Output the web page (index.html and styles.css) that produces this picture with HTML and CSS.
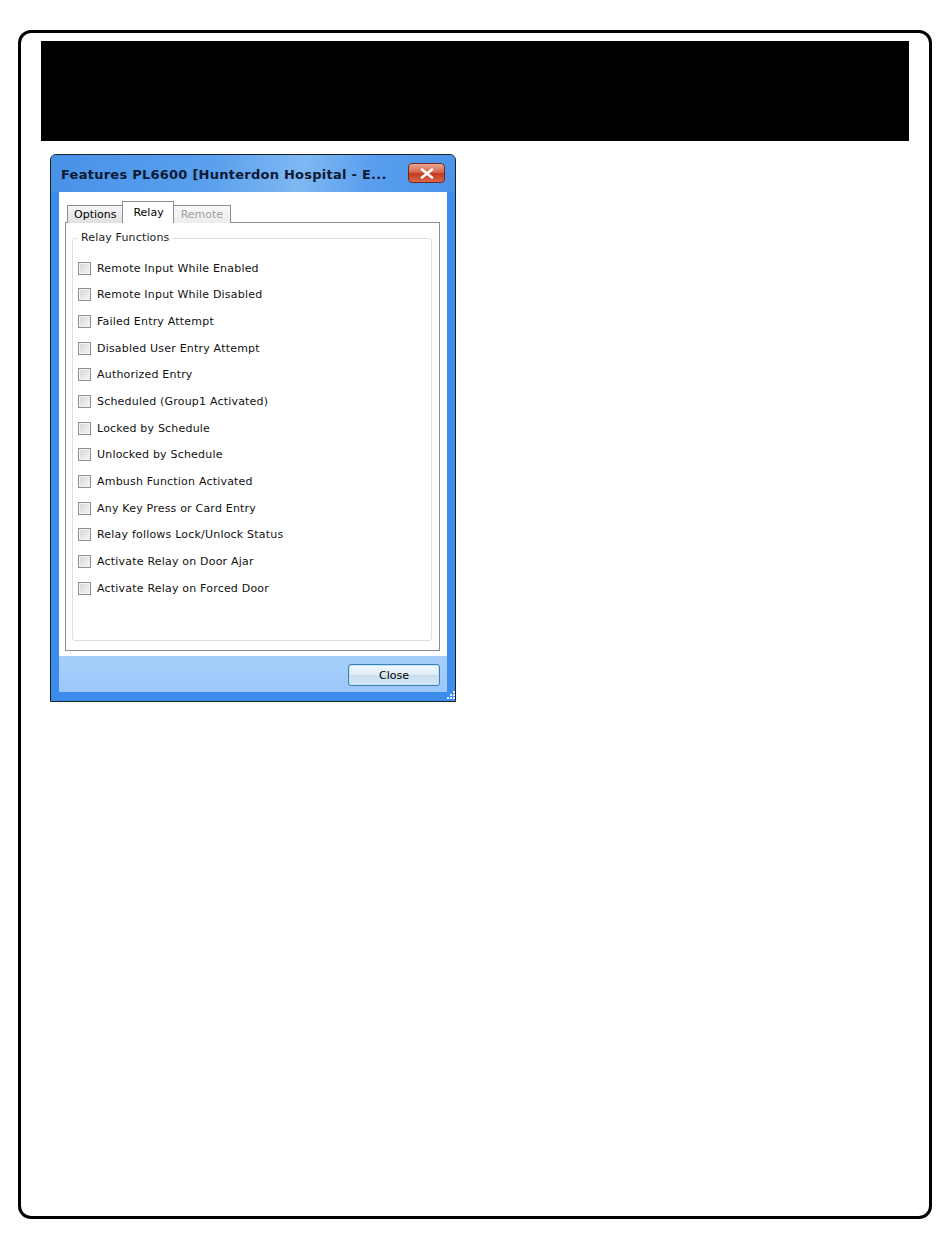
FILE: index.html
```html
<!DOCTYPE html>
<html>
<head>
<meta charset="utf-8">
<link rel="stylesheet" href="styles.css">
</head>
<body>
<div class="page">
  <div class="banner"></div>
  <div class="window">
    <div class="titlebar">
      <span class="title">Features PL6600 [Hunterdon Hospital - E...</span>
      <span class="closex">
        <svg width="14" height="11" viewBox="0 0 14 11"><path d="M2 1.5 L12 9.5 M12 1.5 L2 9.5" stroke="#fff" stroke-width="2.6" stroke-linecap="round"/></svg>
      </span>
    </div>
    <div class="client">
      <div class="tabs">
        <div class="tab">Options</div>
        <div class="tab active">Relay</div>
        <div class="tab disabled">Remote</div>
      </div>
      <div class="panel">
        <div class="group">
          <div class="legend">Relay Functions</div>
          <ul class="checks">
            <li><span class="box"></span>Remote Input While Enabled</li>
            <li><span class="box"></span>Remote Input While Disabled</li>
            <li><span class="box"></span>Failed Entry Attempt</li>
            <li><span class="box"></span>Disabled User Entry Attempt</li>
            <li><span class="box"></span>Authorized Entry</li>
            <li><span class="box"></span>Scheduled (Group1 Activated)</li>
            <li><span class="box"></span>Locked by Schedule</li>
            <li><span class="box"></span>Unlocked by Schedule</li>
            <li><span class="box"></span>Ambush Function Activated</li>
            <li><span class="box"></span>Any Key Press or Card Entry</li>
            <li><span class="box"></span>Relay follows Lock/Unlock Status</li>
            <li><span class="box"></span>Activate Relay on Door Ajar</li>
            <li><span class="box"></span>Activate Relay on Forced Door</li>
          </ul>
        </div>
      </div>
    </div>
    <div class="footer">
      <button class="btn">Close</button>
    </div>
    <div class="bottomframe">
      <svg class="grip" width="10" height="10" viewBox="0 0 10 10"><g fill="#e8f2ff"><rect x="8" y="0" width="2" height="2"/><rect x="5" y="3" width="2" height="2"/><rect x="8" y="3" width="2" height="2"/><rect x="2" y="6" width="2" height="2"/><rect x="5" y="6" width="2" height="2"/><rect x="8" y="6" width="2" height="2"/></g></svg>
    </div>
  </div>
</div>
</body>
</html>
```
FILE: styles.css
```css
html, body {
  margin: 0;
  padding: 0;
  background: #fff;
}
.page {
  box-sizing: border-box;
  margin: 30px 0 0 18px;
  width: 914px;
  height: 1189px;
  border: 3px solid #000;
  border-radius: 13px;
  padding: 8px 20px 0 20px;
}
.banner {
  height: 100px;
  background: #000;
}
.window {
  box-sizing: border-box;
  margin: 13px 0 0 9px;
  width: 406px;
  height: 548px;
  border: 1px solid #1b1f26;
  border-radius: 6px 6px 0 0;
  background: #3b8ced;
  padding: 0 8px 0 8px;
  display: flex;
  flex-direction: column;
  position: relative;
  font-family: "DejaVu Sans", Verdana, sans-serif;
}
.titlebar {
  height: 37px;
  margin: 0 -8px;
  padding: 0 10px 0 10px;
  display: flex;
  align-items: center;
  justify-content: space-between;
  background: linear-gradient(100deg, #4791e8 0%, #5aa0ee 40%, #80b8f2 62%, #5a9fee 78%, #4a93ea 100%);
  border-radius: 5px 5px 0 0;
}
.title {
  font-weight: bold;
  font-size: 13px;
  color: #0c1a33;
  letter-spacing: 0.25px;
  margin-top: 2px;
  white-space: nowrap;
}
.closex {
  width: 37px;
  height: 20px;
  box-sizing: border-box;
  border: 1px solid #6e2a22;
  border-radius: 4px;
  background: linear-gradient(#e9a594 0%, #d7694f 45%, #c2391f 55%, #d9674c 100%);
  display: flex;
  align-items: center;
  justify-content: center;
  margin-top: -1px;
  flex: none;
}
.client {
  height: 464px;
  background: #fff;
  padding: 9px 7px 5px 6px;
  box-sizing: border-box;
  display: flex;
  flex-direction: column;
}
.tabs {
  display: flex;
  align-items: flex-end;
  height: 22px;
  padding-left: 2px;
  position: relative;
  z-index: 1;
  margin-bottom: -1px;
}
.tab {
  box-sizing: border-box;
  height: 18px;
  border: 1px solid #8c8e94;
  border-bottom: none;
  background: linear-gradient(#f6f6f6, #e0e0e0);
  font-size: 11px;
  color: #000;
  padding: 2px 6px 0 6px;
  margin-right: -1px;
  line-height: 14px;
}
.tab.active {
  height: 22px;
  background: #fff;
  padding-top: 4px;
  padding-left: 10px;
  padding-right: 9px;
}
.tab.disabled {
  color: #a0a0a0;
  background: linear-gradient(#f8f8f8, #ececec);
  padding-left: 7px;
  padding-right: 7px;
}
.panel {
  flex: 1;
  border: 1px solid #898c95;
  padding: 15px 7px 9px 6px;
  display: flex;
}
.group {
  flex: 1;
  border: 1px solid #d5dfe5;
  border-radius: 3px;
  position: relative;
  padding: 16px 0 0 5px;
}
.legend {
  position: absolute;
  top: -8px;
  left: 5px;
  background: #fff;
  padding: 0 3px;
  font-size: 11px;
  color: #1c1c1c;
  line-height: 14px;
  letter-spacing: 0.15px;
}
.checks {
  list-style: none;
  margin: 0;
  padding: 0;
}
.checks li {
  height: 26.67px;
  display: flex;
  align-items: center;
  font-size: 11px;
  color: #111;
  letter-spacing: 0.2px;
}
.box {
  box-sizing: border-box;
  width: 13px;
  height: 13px;
  border: 1px solid #8e8f8f;
  background: linear-gradient(135deg, #d4d4d4, #f7f7f7);
  box-shadow: inset 0 0 0 1px #f4f4f4;
  margin-right: 6px;
  flex: none;
}
.footer {
  height: 36px;
  margin: 0;
  background: linear-gradient(#a6cffb, #9cc8fa);
  display: flex;
  justify-content: flex-end;
  align-items: center;
  padding-right: 7px;
}
.btn {
  width: 92px;
  height: 22px;
  border: 1px solid #3c7fb1;
  border-radius: 3px;
  background: linear-gradient(#f2f8fd 0%, #e3eef8 48%, #c8def0 52%, #d8e8f5 100%);
  box-shadow: inset 0 0 0 1px #bfe4f9;
  font-family: "DejaVu Sans", Verdana, sans-serif;
  font-size: 11px;
  color: #000;
  padding: 0;
  margin-top: 2px;
}
.bottomframe {
  flex: 1;
  margin: 0 -8px;
  background: #3b8ced;
  position: relative;
}
.grip {
  position: absolute;
  right: 0;
  bottom: 0;
}
```
